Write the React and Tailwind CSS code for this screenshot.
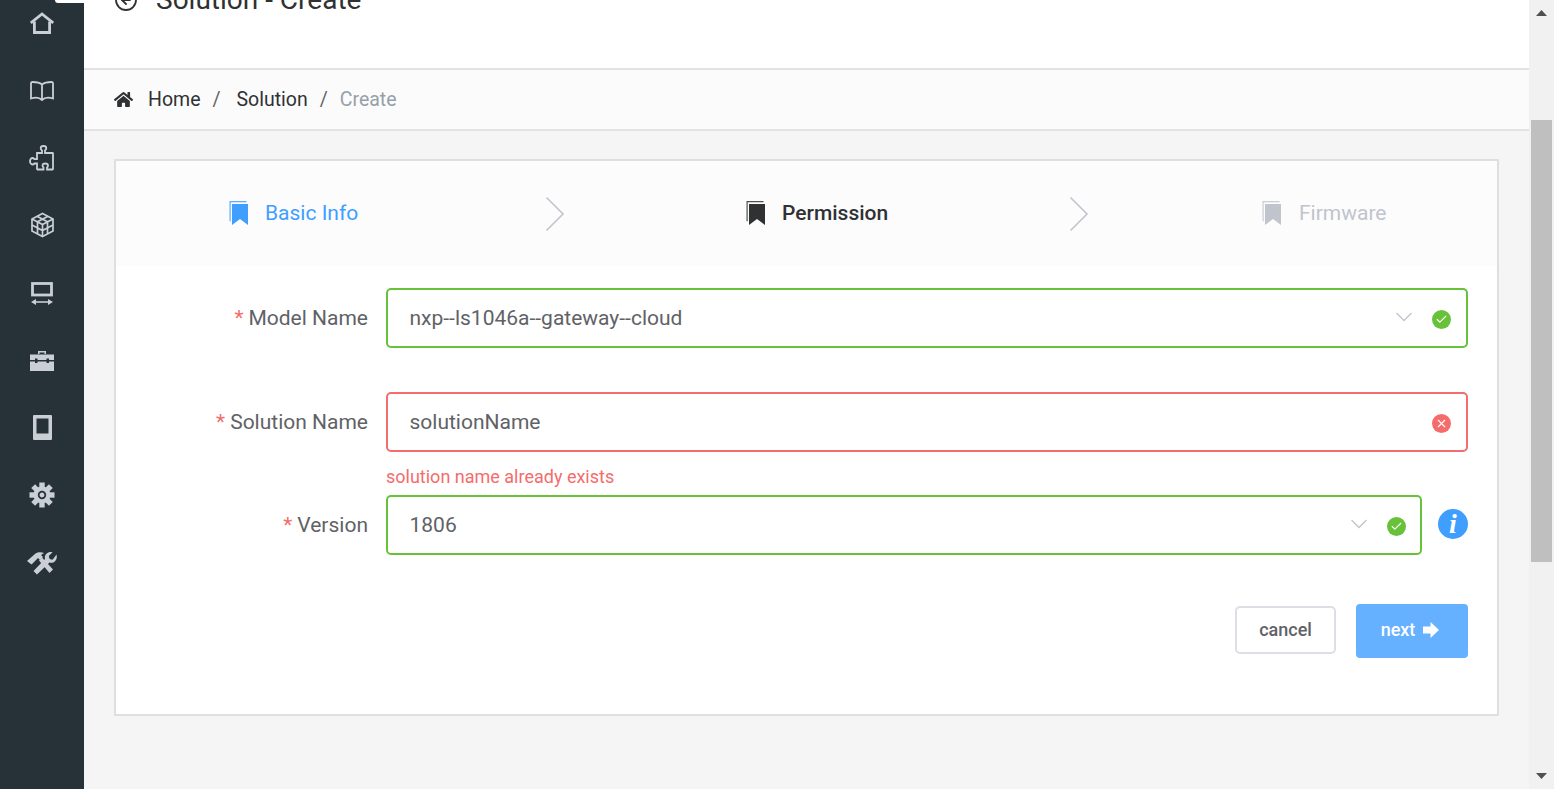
import React from 'react'
import { Check, X, CircleArrowLeft } from 'lucide-react'
import { FaHome } from 'react-icons/fa'

const HomeIcon = () => (
  <svg width="24" height="22" viewBox="0 0 24 22" fill="none" stroke="currentColor" strokeWidth="2.800">
    <path d="M.8 11 12 2l11.200 9" strokeLinejoin="miter" />
    <path d="M4.400 9.500v11h15.200v-11" />
  </svg>
)

const BookIcon = () => (
  <svg width="24" height="20" viewBox="0 0 24 20" fill="none" stroke="currentColor" strokeWidth="1.800" className="mt-[2px]">
    <path d="M12 3.500C10 1.800 6 1 2.500 1 1.500 1 1 1.500 1 2.500v15c2-.6 3.500-.8 5-.8 2.500 0 4.500.8 6 2.300 1.500-1.500 3.500-2.300 6-2.300 1.500 0 3 .2 5 .8v-15c0-1-.5-1.500-1.500-1.500C18 1 14 1.800 12 3.500zM12 3.500V19" />
  </svg>
)

const PuzzleIcon = () => (
  <svg width="26" height="26" viewBox="0 0 26 26" fill="none" stroke="currentColor" strokeWidth="1.800">
    <path d="M8 8h5V5.500c-1-.8-1.300-1.500-1.300-2.300C11.700 2 13 1 14.500 1s2.800 1 2.800 2.200c0 .8-.3 1.500-1.300 2.300V8h7.500a.5.500 0 0 1 .5.500V24a.5.500 0 0 1-.5.500H18v-2c.8-.6 1-1.200 1-1.800 0-1.200-1.100-2.200-2.700-2.200s-2.800 1-2.800 2.200c0 .6.300 1.200 1 1.800v2H8.500A.5.500 0 0 1 8 24v-5.500H5.500c-.7.700-1.300 1-2 1C2.100 19.500 1 18 1 16.300S2.100 13 3.500 13c.7 0 1.300.4 2 1.100H8z" />
  </svg>
)

const CubeIcon = () => (
  <svg width="25" height="26" viewBox="0 0 25 26" fill="none" stroke="currentColor" strokeWidth="1.700">
    <path d="M12.500 1.500 23 7v12l-10.500 5.500L2 19V7z" />
    <path d="M2 7l10.500 5.500L23 7M12.500 12.500v12M7 4.200l10.500 5.600v11.800M18 4.200 7.500 9.800v11.800M2 13l10.500 5.500L23 13" />
  </svg>
)

const ScreenIcon = () => (
  <svg width="24" height="24" viewBox="0 0 24 24" fill="none" stroke="currentColor" className="mt-[2px]">
    <rect x="2.500" y="1.500" width="19" height="11.500" strokeWidth="2.800" />
    <path d="M3 20h18" strokeWidth="1.600" />
    <path d="M6 17v6L1 20zM18 17v6l5-3z" fill="currentColor" stroke="none" />
  </svg>
)

const ToolboxIcon = () => (
  <svg width="24" height="22" viewBox="0 0 24 22" fill="currentColor" className="mt-[2px]">
    <path d="M8 4V1h8v3h-1.500V2.500h-5V4z" />
    <path d="M0 4.500h24V10h-5V8.500h-2.500V10h-9V8.500H5V10H0z" />
    <path d="M0 11.500h5V13h2.500v-1.500h9V13H19v-1.500h5V21H0z" />
  </svg>
)

const TabletIcon = () => (
  <svg width="19" height="25" viewBox="0 0 19 25">
    <path fillRule="evenodd" fill="currentColor" d="M1 0h17a1 1 0 0 1 1 1v23a1 1 0 0 1-1 1H1a1 1 0 0 1-1-1V1a1 1 0 0 1 1-1zm2.500 3.500v15h12v-15z" />
  </svg>
)

const GearIcon = () => (
  <svg width="26" height="26" viewBox="-13 -13 26 26" fill="currentColor" className="-mt-[1px]">
    <circle r="8.500" />
    {[0, 45, 90, 135].map(deg => (
      <rect key={deg} x="-2.700" y="-12.500" width="5.400" height="25" transform={`rotate(${deg})`} />
    ))}
    <circle r="3.300" stroke="#263238" strokeWidth="1.800" />
  </svg>
)

const ToolsIcon = () => (
  <svg width="32" height="24" viewBox="0 0 32 24" fill="currentColor">
    <path d="M1 10 9.500 2.500C12 .8 15.500.8 18 2l-3 2 2 2-3 3-2-2-6.500 6.500z" />
    <path d="M13 9.500l3-3L27 18.500 23.500 22z" />
    <path d="M30.500 3.500c.8 2.600.2 5-1.500 6.700-1.500 1.400-3.500 1.900-5.500 1.300L11 23.500l-3.500-3.500L19 8c-.5-2 0-4 1.400-5.300C22 1.200 24.300.6 26.500 1.200L22.800 5l.8 3 3 .8z" />
  </svg>
)

const Bookmark = ({ className }) => (
  <svg width="19" height="25" viewBox="0 0 19 25" fill="currentColor" className={className}>
    <path d="M.5 1h17v1.200H1.700v19H.5z" opacity=".85" />
    <path d="M3 4h16v21l-8-6-8 6z" />
  </svg>
)

const StepArrow = () => (
  <svg width="20" height="36" viewBox="0 0 20 36" fill="none" stroke="#c0c4cc" strokeWidth="1.600" className="shrink-0">
    <path d="M1.500 1.500 18 18 1.500 34.500" />
  </svg>
)

const SelectChevron = () => (
  <svg width="16" height="10" viewBox="0 0 16 10" fill="none" stroke="#c0c4cc" strokeWidth="1.300" className="mr-[20px] -mt-[2px] shrink-0">
    <path d="M.5 1 8 8.500 15.500 1" />
  </svg>
)

const navIcons = [
  <HomeIcon />,
  <BookIcon />,
  <PuzzleIcon />,
  <CubeIcon />,
  <ScreenIcon />,
  <ToolboxIcon />,
  <TabletIcon />,
  <GearIcon />,
  <ToolsIcon />,
]

const StatusDot = ({ ok }) => (
  <span className={`w-[19px] h-[19px] mt-[2px] rounded-full flex items-center justify-center text-white shrink-0 ${ok ? 'bg-[#67c23a]' : 'bg-[#f56c6c]'}`}>
    {ok ? <Check size={13} strokeWidth={2} /> : <X size={13} strokeWidth={2} />}
  </span>
)

const Field = ({ label, value, ok, select, padRight = 'pr-[15px]' }) => (
  <div className="flex items-center flex-1">
    <label className="w-[270px] pr-[18px] pt-[2px] text-right text-[21px] text-[#606266] shrink-0">
      <span className="text-[#f56c6c] mr-[5px]">*</span>{label}
    </label>
    <div className={`flex-1 h-[60px] border-2 rounded-[5px] flex items-center pl-[21.500px] ${padRight} bg-white text-[21px] text-[#606266] ${ok ? 'border-[#67c23a]' : 'border-[#f56c6c]'}`}>
      <span className="flex-1 pt-[2px]">{value}</span>
      {select && <SelectChevron />}
      <StatusDot ok={ok} />
    </div>
  </div>
)

export default function App() {
  return (
    <div className="flex h-[789px] overflow-hidden bg-[#f5f5f5]" style={{ fontFamily: 'Roboto, sans-serif' }}>
      {/* Sidebar */}
      <nav className="w-[84px] shrink-0 bg-[#263238] text-[#c9cfd4] relative">
        <div className="absolute right-0 top-0 w-[29px] h-[3px] bg-white rounded-bl-[3px]"></div>
        <div className="-mt-[11px]">
          {navIcons.map((icon, i) => (
            <div key={i} className="h-[67.5px] flex items-center justify-center">{icon}</div>
          ))}
        </div>
      </nav>

      <main className="flex-1 min-w-0 overflow-hidden">
        {/* Title */}
        <header className="h-[70px] bg-white border-b-2 border-[#e2e2e2] pl-[30px] overflow-hidden">
          <div className="flex items-center -mt-[17px] text-[28px] leading-[34px] text-[#303133]">
            <CircleArrowLeft size={24} strokeWidth={1.8} className="mr-[18px]" />
            <span>Solution - Create</span>
          </div>
        </header>

        {/* Breadcrumb */}
        <div className="h-[61px] bg-[#fbfbfb] border-b-2 border-[#e2e2e2] flex items-center pl-[30px] text-[19.5px] text-[#303133]">
          <FaHome size={19} className="mr-[15px]" />
          <span>Home</span>
          <span className="mx-[12px] text-[#606266]">/</span>
          <span className="ml-[4px]">Solution</span>
          <span className="mx-[12px] text-[#606266]">/</span>
          <span className="text-[#97a0a8]">Create</span>
        </div>

        {/* Card */}
        <section className="mx-[30px] mt-[28px] h-[557px] border-2 border-[#dfdfdf] bg-white">
          <div className="h-[105px] bg-[#fcfcfd] flex items-center pl-[113px] text-[21px]">
            <div className="flex items-center w-[316px] text-[#409eff]">
              <Bookmark className="mr-[17px] -mt-[2px]" />
              <span>Basic Info</span>
            </div>
            <StepArrow />
            <div className="flex items-center ml-[181px] w-[323px] text-[#303133] font-medium">
              <Bookmark className="mr-[17px] -mt-[2px]" />
              <span>Permission</span>
            </div>
            <StepArrow />
            <div className="flex items-center ml-[173px] text-[#c0c4cc]">
              <Bookmark className="mr-[18px] -mt-[2px]" />
              <span>Firmware</span>
            </div>
          </div>

          <form className="pt-[22px] pr-[29px]">
            <div className="flex">
              <Field label="Model Name" value="nxp--ls1046a--gateway--cloud" ok select />
            </div>
            <div className="flex mt-[44px]">
              <Field label="Solution Name" value="solutionName" />
            </div>
            <p className="ml-[270px] h-[43px] pt-[14px] text-[18px] leading-[22px] text-[#f56c6c]">solution name already exists</p>
            <div className="flex items-center">
              <Field label="Version" value="1806" ok select padRight="pr-[14px]" />
              <span className="ml-[16px] w-[30px] h-[30px] rounded-full bg-[#409eff] text-white flex items-center justify-center italic font-bold text-[28px] -mt-[2px]" style={{ fontFamily: '"Liberation Serif", serif' }}>i</span>
            </div>
            <div className="flex justify-end items-center mt-[49px] gap-[20px]">
              <button type="button" className="w-[101px] h-[48px] border-2 border-[#dcdfe6] rounded-[5px] bg-white text-[18px] font-medium text-[#606266] pb-[2px] -mt-[2px]">cancel</button>
              <button type="button" className="w-[112px] h-[54px] rounded-[4px] bg-[#66b1ff] text-white text-[18px] font-medium flex items-center justify-center gap-[8px] pb-[3px] pr-[1px]">
                <span className="ml-[-3px]">next</span>
                <svg width="16" height="16" viewBox="0 0 16 16" fill="currentColor"><path d="M0 4.500h7.500V0L16 8l-8.500 8v-4.500H0z" /></svg>
              </button>
            </div>
          </form>
        </section>
      </main>

      {/* Scrollbar */}
      <aside className="w-[25px] shrink-0 bg-[#f1f1f1] flex flex-col items-center px-[1px]">
        <svg width="11" height="6" viewBox="0 0 11 6" fill="#505050" className="mt-[10px]"><path d="M5.500 0 11 6H0z" /></svg>
        <div className="w-[21px] h-[442px] bg-[#bfbfbf] mt-[104px]"></div>
        <svg width="11" height="6" viewBox="0 0 11 6" fill="#505050" className="mt-[211px]"><path d="M5.500 6 11 0H0z" /></svg>
      </aside>
    </div>
  )
}
